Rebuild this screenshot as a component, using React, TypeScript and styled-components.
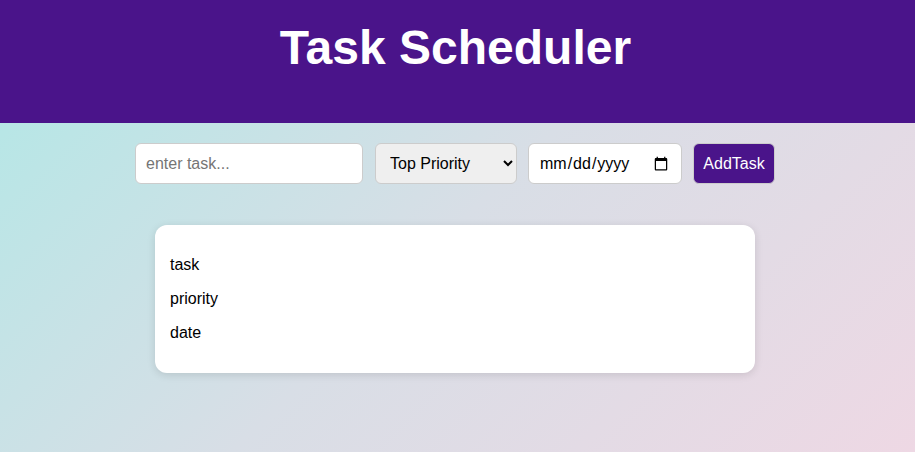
import React from "react";
import styled, { createGlobalStyle } from "styled-components";

const GlobalStyle = createGlobalStyle`
  html, body {
    margin: 0;
    padding: 0;
  }
  body {
    font-family: "Liberation Sans", Arial, sans-serif;
    min-height: 100vh;
    background: linear-gradient(135deg, #b0e8e6 0%, #d8dee6 50%, #eed8e4 100%);
    background-attachment: fixed;
  }
  * { box-sizing: border-box; }
`;

const Page = styled.div`
  min-height: 100vh;
  display: flex;
  flex-direction: column;
`;

const Header = styled.header`
  width: 100%;
  height: 123px;
  padding-right: 4px;
  background: #4a148a;
  display: flex;
  justify-content: center;
  align-items: flex-start;
`;

const Title = styled.h1`
  margin: 20px 0 0;
  color: #ffffff;
  font-size: 48px;
  font-weight: 700;
  line-height: 55px;
`;

const Main = styled.main`
  display: flex;
  flex-direction: column;
  align-items: center;
  padding-right: 5px;
`;

const Form = styled.form`
  display: flex;
  align-items: center;
  gap: 11px;
  margin-top: 20px;
`;

const Field = styled.input<{ $w: number; $mr?: number }>`
  width: ${(p) => p.$w}px;
  margin-right: ${(p) => p.$mr ?? 0}px;
  height: 41px;
  padding: 0 10px;
  border: 1px solid #cccccc;
  border-radius: 6px;
  background: #ffffff;
  font-family: "Liberation Sans", Arial, sans-serif;
  font-size: 16px;
  color: #000;
  outline: none;
  &::placeholder { color: #757575; }
`;

const Select = styled.select`
  width: 142px;
  height: 41px;
  padding: 0 10px;
  border: 1px solid #cccccc;
  border-radius: 6px;
  background: #efefef;
  font-family: "Liberation Sans", Arial, sans-serif;
  font-size: 16px;
  color: #000;
`;

const AddButton = styled.button`
  width: 82px;
  height: 41px;
  border: 1px solid #cccccc;
  border-radius: 6px;
  background: #4a148a;
  color: #ffffff;
  font-family: "Liberation Sans", Arial, sans-serif;
  font-size: 16px;
  padding: 0;
  cursor: pointer;
`;

const Card = styled.div`
  width: 600px;
  margin-top: 41px;
  padding: 15px;
  background: #ffffff;
  border-radius: 12px;
  box-shadow: 0 2px 8px rgba(0, 0, 0, 0.12);
`;

const TaskItem = styled.div``;

const Line = styled.p`
  margin: 16px 0;
  font-size: 16px;
  color: #000;
`;

export default function App() {
  return (
    <>
      <GlobalStyle />
      <Page>
        <Header>
          <Title>Task Scheduler</Title>
        </Header>
        <Main>
          <Form onSubmit={(e) => e.preventDefault()}>
            <Field $w={228} $mr={1} type="text" placeholder="enter task..." />
            <Select defaultValue="top">
              <option value="top">Top Priority</option>
              <option value="middle">Middle Priority</option>
              <option value="low">Low Priority</option>
            </Select>
            <Field $w={154} type="date" />
            <AddButton type="submit">AddTask</AddButton>
          </Form>
          <Card>
            <TaskItem>
              <Line>task</Line>
              <Line>priority</Line>
              <Line>date</Line>
            </TaskItem>
          </Card>
        </Main>
      </Page>
    </>
  );
}
